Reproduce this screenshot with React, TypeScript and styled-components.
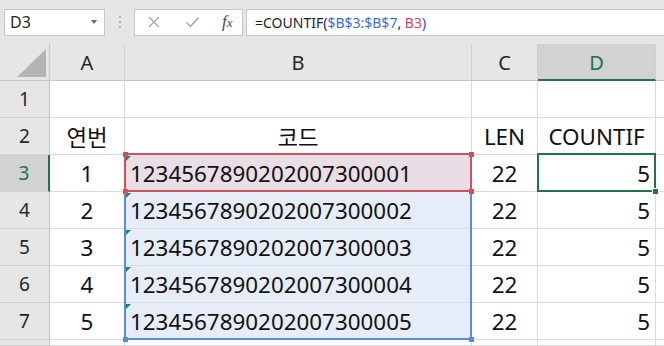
import React from 'react';
import styled, { createGlobalStyle, css } from 'styled-components';

const GlobalStyle = createGlobalStyle`
  html, body { margin: 0; padding: 0; background: #e6e6e6; overflow: hidden; }
  body { font-family: "Noto Sans", "Noto Sans CJK KR", sans-serif; }
`;

const Page = styled.div`
  width: 664px;
  height: 346px;
  display: flex;
  flex-direction: column;
  background: #e6e6e6;
  overflow: hidden;
`;

const FormulaBar = styled.div`
  height: 44px;
  flex-shrink: 0;
  display: flex;
  align-items: center;
  padding-left: 4px;
`;

const NameBox = styled.div`
  width: 101px;
  height: 27px;
  box-sizing: border-box;
  border: 1px solid #c6c6c6;
  background: #fff;
  display: flex;
  align-items: center;
  justify-content: space-between;
  padding: 0 7px 0 5px;
  font-size: 16px;
  color: #262626;
`;

const DropArrow = styled.span`
  width: 0;
  height: 0;
  border-left: 3.5px solid transparent;
  border-right: 3.5px solid transparent;
  border-top: 4px solid #6a6a6a;
`;

const Grip = styled.div`
  margin-left: 14px;
  display: flex;
  flex-direction: column;
  gap: 3px;
  span { width: 2px; height: 2px; background: #b5b5b5; }
`;

const IconBox = styled.div`
  margin-left: 13px;
  width: 109px;
  height: 27px;
  box-sizing: border-box;
  border: 1px solid #c6c6c6;
  background: #fff;
  display: flex;
  align-items: center;
  padding-left: 12px;
  gap: 24px;
`;

const Fx = styled.span`
  font-family: "Liberation Serif", serif;
  font-style: italic;
  font-size: 17px;
  color: #4a4a4a;
  margin-left: -2px;
  sub { font-size: 13px; vertical-align: 0; }
`;

const FormulaInput = styled.div`
  margin-left: 3px;
  flex: 1;
  height: 27px;
  box-sizing: border-box;
  border: 1px solid #c6c6c6;
  border-right: none;
  background: #fff;
  display: flex;
  align-items: center;
  padding-left: 8px;
  font-size: 14px;
  color: #222;
  white-space: pre;
`;

const Tok = styled.span<{ $c: string }>`
  color: ${(p) => p.$c};
`;

const SheetArea = styled.div`
  flex: 1;
  display: grid;
  grid-template-columns: 1fr;
  grid-template-rows: 1fr;
  min-height: 0;
`;

const gridTemplate = css`
  grid-area: 1 / 1;
  display: grid;
  grid-template-columns: 50px 75px 347px 66px 118px 1fr;
  grid-template-rows: 37px repeat(7, 37px) 1fr;
`;

const Sheet = styled.div`
  ${gridTemplate}
  background: #fff;
`;

const Overlay = styled.div`
  ${gridTemplate}
  pointer-events: none;
  z-index: 2;
`;

const Corner = styled.div`
  background: #e6e6e6;
  border-right: 1px solid #c4c4c4;
  border-bottom: 1px solid #c4c4c4;
  display: flex;
  align-items: flex-end;
  justify-content: flex-end;
  padding: 0 3px 3px 0;
`;

const CornerTri = styled.div`
  width: 0;
  height: 0;
  border-left: 29px solid transparent;
  border-bottom: 28px solid #b4b4b4;
`;

const ColHead = styled.div<{ $sel?: boolean }>`
  background: ${(p) => (p.$sel ? '#d2d2d2' : '#e6e6e6')};
  border-right: 1px solid #cfcfcf;
  border-bottom: ${(p) => (p.$sel ? '2px solid #217346' : '1px solid #c4c4c4')};
  display: flex;
  align-items: center;
  justify-content: center;
  font-size: 20px;
  color: ${(p) => (p.$sel ? '#217346' : '#262626')};
  padding-top: ${(p) => (p.$sel ? '1px' : '0')};
`;

const RowHead = styled.div<{ $sel?: boolean }>`
  background: ${(p) => (p.$sel ? '#d2d2d2' : '#e6e6e6')};
  border-right: ${(p) => (p.$sel ? '2px solid #217346' : '1px solid #c4c4c4')};
  border-bottom: 1px solid #d0d0d0;
  display: flex;
  align-items: center;
  justify-content: center;
  font-size: 19px;
  color: ${(p) => (p.$sel ? '#217346' : '#262626')};
`;

type Tone = 'none' | 'red' | 'blue';

const Cell = styled.div<{ $align?: 'left' | 'center' | 'right'; $tone?: Tone; $flag?: boolean }>`
  position: relative;
  min-width: 0;
  border-right: 1px solid #dadada;
  border-bottom: 1px solid #dadada;
  display: flex;
  align-items: center;
  justify-content: ${(p) =>
    p.$align === 'left' ? 'flex-start' : p.$align === 'right' ? 'flex-end' : 'center'};
  padding: 0 5px;
  font-size: 22.4px;
  color: #111;
  white-space: nowrap;
  background: ${(p) =>
    p.$tone === 'red' ? '#e9dee6' : p.$tone === 'blue' ? '#e6edf8' : '#fff'};
  ${(p) =>
    p.$flag &&
    css`
      &::before {
        content: '';
        position: absolute;
        left: 1px;
        top: 1px;
        width: 0;
        height: 0;
        border-top: 5px solid #1f8a3f;
        border-right: 5px solid transparent;
      }
    `}
`;

const RangeBox = styled.div<{ $col: number; $rows: string; $color: string }>`
  grid-column: ${(p) => p.$col};
  grid-row: ${(p) => p.$rows};
  position: relative;
  margin: -2px 0 0 -1px;
  border: 2px solid ${(p) => p.$color};
`;

const Handle = styled.span<{ $color: string; $pos: 'tl' | 'tr' | 'bl' | 'br'; $ring?: boolean }>`
  position: absolute;
  width: 5px;
  height: 5px;
  background: ${(p) => p.$color};
  ${(p) => (p.$ring ? 'box-shadow: 0 0 0 1px #fff;' : '')}
  ${(p) => (p.$pos[0] === 't' ? 'top: -3.5px;' : 'bottom: -3.5px;')}
  ${(p) => (p.$pos[1] === 'l' ? 'left: -3.5px;' : 'right: -3.5px;')}
`;

const rows = [
  { n: 1, a: '', b: '', c: '', d: '' },
  { n: 2, a: '연번', b: '코드', c: 'LEN', d: 'COUNTIF', head: true },
  { n: 3, a: '1', b: '1234567890202007300001', c: '22', d: '5' },
  { n: 4, a: '2', b: '1234567890202007300002', c: '22', d: '5' },
  { n: 5, a: '3', b: '1234567890202007300003', c: '22', d: '5' },
  { n: 6, a: '4', b: '1234567890202007300004', c: '22', d: '5' },
  { n: 7, a: '5', b: '1234567890202007300005', c: '22', d: '5' },
];

const XIcon = () => (
  <svg width="14" height="14" viewBox="0 0 14 14">
    <path d="M2 2 L12 12 M12 2 L2 12" stroke="#a3a3a3" strokeWidth="1.3" fill="none" />
  </svg>
);

const CheckIcon = () => (
  <svg width="15" height="14" viewBox="0 0 15 14">
    <path d="M1.5 7.5 L5.5 11.5 L13.5 2.5" stroke="#a3a3a3" strokeWidth="1.4" fill="none" />
  </svg>
);

export default function App() {
  return (
    <Page>
      <GlobalStyle />
      <FormulaBar>
        <NameBox>
          <span>D3</span>
          <DropArrow />
        </NameBox>
        <Grip>
          <span />
          <span />
          <span />
        </Grip>
        <IconBox>
          <XIcon />
          <CheckIcon />
          <Fx>
            f<sub>x</sub>
          </Fx>
        </IconBox>
        <FormulaInput>
          <Tok $c="#222">=COUNTIF(</Tok>
          <Tok $c="#3f6fd0">$B$3:$B$7</Tok>
          <Tok $c="#222">, </Tok>
          <Tok $c="#d04a57">B3</Tok>
          <Tok $c="#3a4f9a">)</Tok>
        </FormulaInput>
      </FormulaBar>
      <SheetArea>
        <Sheet>
          <Corner>
            <CornerTri />
          </Corner>
          <ColHead>A</ColHead>
          <ColHead>B</ColHead>
          <ColHead>C</ColHead>
          <ColHead $sel>D</ColHead>
          <ColHead />
          {rows.map((r) => {
            const data = r.n >= 3;
            return (
              <React.Fragment key={r.n}>
                <RowHead $sel={r.n === 3}>{r.n}</RowHead>
                <Cell>{r.a}</Cell>
                <Cell
                  $align={r.head ? 'center' : 'left'}
                  $tone={r.n === 3 ? 'red' : data ? 'blue' : 'none'}
                  $flag={data}
                >
                  {r.b}
                </Cell>
                <Cell>{r.c}</Cell>
                <Cell $align={r.head ? 'center' : 'right'}>{r.d}</Cell>
                <Cell />
              </React.Fragment>
            );
          })}
          <RowHead />
          <Cell />
          <Cell />
          <Cell />
          <Cell />
          <Cell />
        </Sheet>
        <Overlay>
          <RangeBox $col={3} $rows="4 / 9" $color="#5b8bd8">
            <Handle $color="#5b8bd8" $pos="bl" />
            <Handle $color="#5b8bd8" $pos="br" />
          </RangeBox>
          <RangeBox $col={3} $rows="4 / 5" $color="#d0505d">
            <Handle $color="#d0505d" $pos="tl" />
            <Handle $color="#d0505d" $pos="tr" />
            <Handle $color="#d0505d" $pos="bl" />
            <Handle $color="#d0505d" $pos="br" />
          </RangeBox>
          <RangeBox $col={5} $rows="4 / 5" $color="#217346">
            <Handle $color="#217346" $pos="br" $ring />
          </RangeBox>
        </Overlay>
      </SheetArea>
    </Page>
  );
}
